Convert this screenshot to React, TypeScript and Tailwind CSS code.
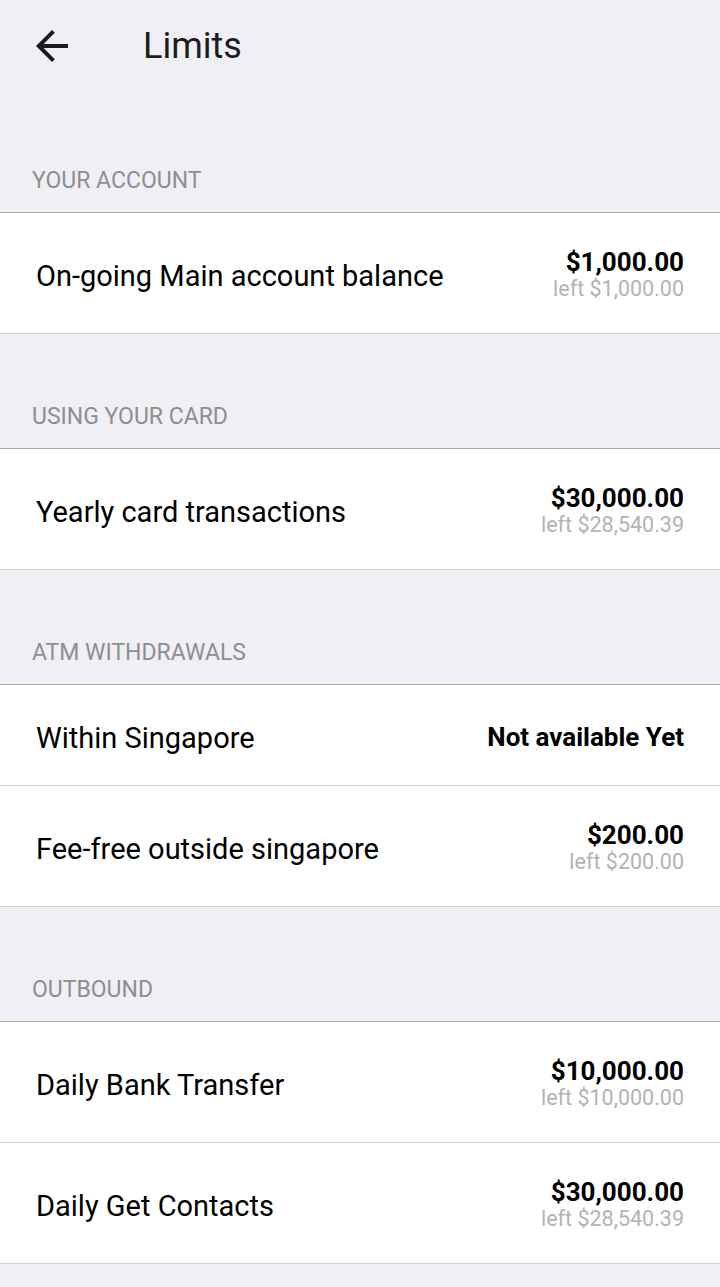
type Limit = {
  label: string;
  amount?: string;
  left?: string;
  note?: string;
};

type Section = {
  title: string;
  items: Limit[];
};

const sections: Section[] = [
  {
    title: "YOUR ACCOUNT",
    items: [
      { label: "On-going Main account balance", amount: "$1,000.00", left: "left $1,000.00" },
    ],
  },
  {
    title: "USING YOUR CARD",
    items: [
      { label: "Yearly card transactions", amount: "$30,000.00", left: "left $28,540.39" },
    ],
  },
  {
    title: "ATM WITHDRAWALS",
    items: [
      { label: "Within Singapore", note: "Not available Yet" },
      { label: "Fee-free outside singapore", amount: "$200.00", left: "left $200.00" },
    ],
  },
  {
    title: "OUTBOUND",
    items: [
      { label: "Daily Bank Transfer", amount: "$10,000.00", left: "left $10,000.00" },
      { label: "Daily Get Contacts", amount: "$30,000.00", left: "left $28,540.39" },
    ],
  },
];

function BackArrow() {
  return (
    <svg width="48" height="48" viewBox="0 0 24 24" fill="#1c1c1e">
      <path d="M20 11H7.83l5.59-5.59L12 4l-8 8 8 8 1.41-1.41L7.83 13H20v-2z" />
    </svg>
  );
}

function LimitRow({ item }: { item: Limit }) {
  return (
    <div className="flex items-center justify-between border-b border-[#cfcfd1] bg-white pt-[35px] pb-[31px] pl-9 pr-9">
      <span className="pt-[3px] text-[29px] leading-[31px] text-black">{item.label}</span>
      {item.note ? (
        <span className="text-[26px] font-bold leading-[28px] text-black">{item.note}</span>
      ) : (
        <div className="flex flex-col items-end">
          <span className="text-[26px] font-bold leading-[28px] text-black">{item.amount}</span>
          <span className="text-[21.5px] leading-[26px] text-[#b3b3b5]">{item.left}</span>
        </div>
      )}
    </div>
  );
}

export default function App() {
  return (
    <div className="min-h-[1287px] bg-[#efeff4] font-['Roboto',sans-serif]">
      <header className="flex h-[92px] items-center pl-7">
        <BackArrow />
        <h1 className="ml-[67px] text-[36px] leading-none text-[#1c1c1e]">Limits</h1>
      </header>

      <div className="pt-[6px]">
        {sections.map((section) => (
          <section key={section.title}>
            <div className="flex h-[115px] items-end border-b border-[#a9a9ab] px-8 pb-[17px]">
              <span className="text-[23px] leading-[28px] text-[#8e8e92]">{section.title}</span>
            </div>
            {section.items.map((item) => (
              <LimitRow key={item.label} item={item} />
            ))}
          </section>
        ))}
      </div>
    </div>
  );
}
